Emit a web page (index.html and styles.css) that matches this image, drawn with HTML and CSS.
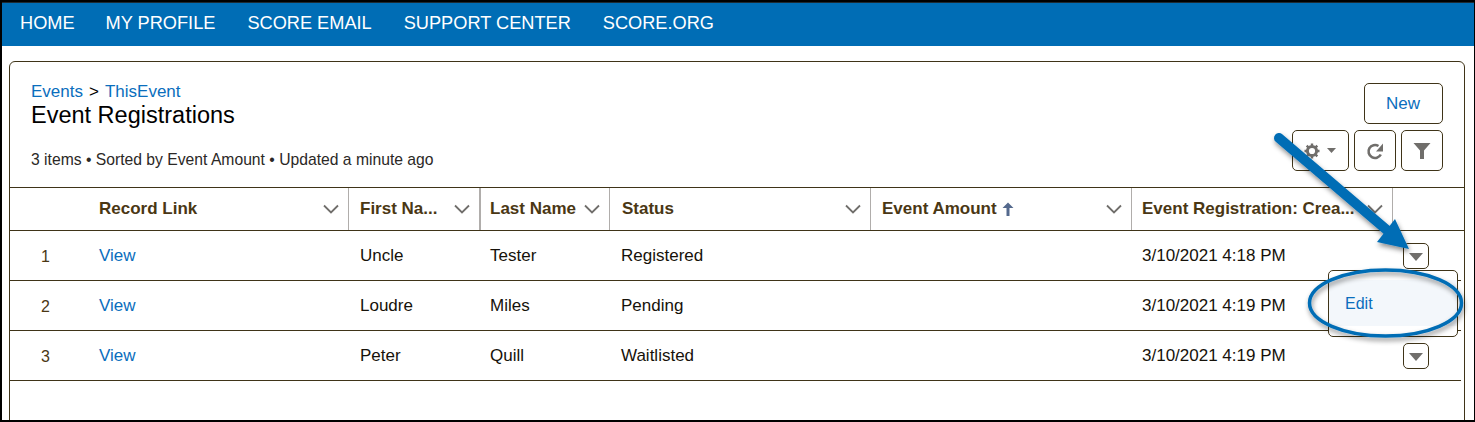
FILE: index.html
```html
<!DOCTYPE html>
<html lang="en">
<head>
<meta charset="utf-8">
<title>Event Registrations</title>
<link rel="stylesheet" href="styles.css">
</head>
<body>
<div class="frame">
  <nav class="topnav">
    <a class="home">HOME</a><a>MY PROFILE</a><a>SCORE EMAIL</a><a>SUPPORT CENTER</a><a>SCORE.ORG</a>
  </nav>
  <main class="card">
    <header class="head">
      <div class="title-block">
        <div class="crumbs"><a class="link">Events</a><span class="gt">&gt;</span><a class="link">ThisEvent</a></div>
        <h1>Event Registrations</h1>
        <p class="meta">3 items • Sorted by Event Amount • Updated a minute ago</p>
      </div>
      <div class="actions">
        <button class="btn new">New</button>
        <div class="tools">
          <button class="btn gear" aria-label="Settings">
            <svg width="18" height="18" viewBox="0 0 18 18"><circle cx="9" cy="9" r="4.6" fill="none" stroke="#706e6b" stroke-width="3"/><path d="M9 1.5v3M9 13.5v3M1.5 9h3M13.5 9h3M3.7 3.7l2.1 2.1M12.2 12.2l2.1 2.1M3.7 14.3l2.1-2.1M12.2 5.8l2.1-2.1" stroke="#706e6b" stroke-width="2.4"/></svg>
            <svg width="9" height="5" viewBox="0 0 9 5"><path d="M0 0h9L4.5 5z" fill="#706e6b"/></svg>
          </button>
          <button class="btn icon" aria-label="Refresh">
            <svg width="20" height="20" viewBox="0 0 20 20"><path d="M15.800 13.500A6.500 6.500 0 1 1 13.500 5" fill="none" stroke="#706e6b" stroke-width="2.600"/><path d="M18 2.500V10.500H11z" fill="#706e6b"/></svg>
          </button>
          <button class="btn icon" aria-label="Filter">
            <svg width="20" height="18" viewBox="0 0 20 18"><path d="M1.500 1h17l-6.500 7.500V17H8V8.500z" fill="#706e6b"/></svg>
          </button>
        </div>
      </div>
    </header>
    <div class="grid hrow">
      <div class="hc empty"></div>
      <div class="hc"><span class="ht">Record Link</span><svg class="chev" viewBox="0 0 16 10"><path d="M1 1.500l7 7 7-7" fill="none" stroke="#706e6b" stroke-width="1.800"/></svg></div>
      <div class="hc"><span class="ht">First Na...</span><svg class="chev" viewBox="0 0 16 10"><path d="M1 1.500l7 7 7-7" fill="none" stroke="#706e6b" stroke-width="1.800"/></svg></div>
      <div class="hc"><span class="ht">Last Name</span><svg class="chev" viewBox="0 0 16 10"><path d="M1 1.500l7 7 7-7" fill="none" stroke="#706e6b" stroke-width="1.800"/></svg></div>
      <div class="hc"><span class="ht">Status</span><svg class="chev" viewBox="0 0 16 10"><path d="M1 1.500l7 7 7-7" fill="none" stroke="#706e6b" stroke-width="1.800"/></svg></div>
      <div class="hc"><span class="ht">Event Amount <svg class="up" width="12" height="14" viewBox="0 0 12 14"><path d="M6 0.500L11.500 6H7.500v8H4.500V6H0.500z" fill="#54698d"/></svg></span><svg class="chev" viewBox="0 0 16 10"><path d="M1 1.500l7 7 7-7" fill="none" stroke="#706e6b" stroke-width="1.800"/></svg></div>
      <div class="hc"><span class="ht">Event Registration: Crea...</span><svg class="chev" viewBox="0 0 16 10"><path d="M1 1.500l7 7 7-7" fill="none" stroke="#706e6b" stroke-width="1.800"/></svg></div>
      <div class="hc empty"></div>
    </div>
    <div class="grid row">
      <div class="c num">1</div><div class="c"><a class="link">View</a></div><div class="c">Uncle</div><div class="c">Tester</div><div class="c">Registered</div><div class="c"></div><div class="c">3/10/2021 4:18 PM</div>
      <div class="c act"><button class="drop" aria-label="Row actions"><svg width="14" height="8" viewBox="0 0 14 8"><path d="M0 0h14L7 8z" fill="#706e6b"/></svg></button></div>
    </div>
    <div class="grid row">
      <div class="c num">2</div><div class="c"><a class="link">View</a></div><div class="c">Loudre</div><div class="c">Miles</div><div class="c">Pending</div><div class="c"></div><div class="c">3/10/2021 4:19 PM</div>
      <div class="c act"></div>
    </div>
    <div class="grid row">
      <div class="c num">3</div><div class="c"><a class="link">View</a></div><div class="c">Peter</div><div class="c">Quill</div><div class="c">Waitlisted</div><div class="c"></div><div class="c">3/10/2021 4:19 PM</div>
      <div class="c act"><button class="drop" aria-label="Row actions"><svg width="14" height="8" viewBox="0 0 14 8"><path d="M0 0h14L7 8z" fill="#706e6b"/></svg></button></div>
    </div>
  </main>
  <div class="menu"><a class="menu-item">Edit</a></div>
  <svg class="callout" width="1475" height="422" viewBox="0 0 1475 422">
    <defs>
      <filter id="sh" x="-10%" y="-10%" width="120%" height="130%"><feDropShadow dx="1" dy="3" stdDeviation="2.500" flood-color="#000" flood-opacity=".45"/></filter>
    </defs>
    <g filter="url(#sh)">
      <ellipse cx="1385.500" cy="303" rx="76" ry="33" fill="none" stroke="#006db5" stroke-width="3.500"/>
      <path d="M1279 138L1388 231" fill="none" stroke="#006db5" stroke-width="10" stroke-linecap="round"/>
      <path d="M1409 249L1377 242L1395 219z" fill="#006db5"/>
    </g>
  </svg>
</div>
</body>
</html>
```
FILE: styles.css
```css
* { box-sizing: border-box; }
html, body { margin: 0; padding: 0; height: 100%; overflow: hidden; background: #fff; }
body { font-family: "Liberation Sans", Arial, sans-serif; color: #16120a; font-size: 17px; }
.frame {
  position: relative;
  width: 1475px;
  height: 422px;
  overflow: hidden;
  border: solid #000;
  border-width: 2px 1px 2px 2px;
  background: #fff;
}
.topnav {
  height: 44px;
  background: #006db5;
  border-top: 1px solid #1c2a33;
  display: flex;
  align-items: center;
  gap: 32px;
  padding: 0 0 2px 18px;
  color: #fff;
  font-size: 18.200px;
}
.home { margin-right: -1px; }
.card {
  margin: 15px 0 0 7px;
  width: 1456px;
  height: 380px;
  border: 1px solid #3f3418;
  border-radius: 6px;
  background: #fff;
}
.head { display: flex; justify-content: space-between; height: 125px; padding: 20px 21px 0 21px; }
.crumbs { font-size: 17px; line-height: 19px; }
.link { color: #0a6ebd; }
.gt { color: #000; margin: 0 6px; }
h1 { margin: 0; font-size: 23.500px; font-weight: 400; line-height: 28px; color: #000; }
.meta { margin: 22px 0 0; font-size: 15.700px; line-height: 18px; color: #2b2826; }
.actions { display: flex; flex-direction: column; align-items: flex-end; gap: 6px; }
.btn {
  background: #fff;
  border: 1px solid #3f3418;
  border-radius: 5px;
  display: flex;
  align-items: center;
  justify-content: center;
  padding: 0;
  font: inherit;
}
.new { width: 79px; height: 41px; color: #0a6ebd; margin-top: 1px; padding-right: 1px; }
.tools { display: flex; gap: 5px; }
.tools .btn { height: 41px; }
.gear { width: 57px; gap: 6px; padding-right: 2px; }
.icon { width: 42px; }
.grid { display: grid; grid-template-columns: 77px 261px 131px 130px 261px 261px 261px 72px; }
.hrow { height: 44px; border-top: 1px solid #3f3418; border-bottom: 1px solid #3f3418; width: 1454px; }
.hc {
  display: flex;
  align-items: center;
  justify-content: space-between;
  padding: 0 9px 0 11px;
  font-size: 17px;
  font-weight: 700;
  color: #4a3714;
  border-left: 1px solid #b0adab;
  white-space: nowrap;
}
.hc:nth-child(1), .hc:nth-child(2) { border-left: 0; padding-left: 12px; }
.hc:nth-child(4) { border-left-width: 2px; padding-left: 9px; }
.hc:nth-child(5) { padding-left: 12px; }
.hc:nth-child(7) { padding-left: 10px; }
.ht { display: inline-flex; align-items: center; gap: 5px; }
.chev { width: 16px; height: 10px; flex: none; }
.row { height: 50px; width: 1451px; border-bottom: 1px solid #3f3418; }
.c { display: flex; align-items: center; padding: 1px 0 0 12px; color: #16120a; font-size: 17px; }
.c:nth-child(4), .c:nth-child(7) { padding-left: 11px; }
.num { justify-content: center; padding: 3px 6px 0 0; color: #4a3714; font-size: 16px; }
.c.act { padding: 1px 0 0 11px; }
.drop {
  width: 26px;
  height: 26px;
  border: 1px solid #3f3418;
  border-radius: 5px;
  background: #fff;
  padding: 1px 0 0;
  display: flex;
  align-items: center;
  justify-content: center;
}
.menu {
  position: absolute;
  left: 1326px;
  top: 268px;
  width: 130px;
  height: 67px;
  background: #fff;
  border: 1px solid #3f3418;
  border-radius: 5px;
  padding-top: 9px;
}
.menu-item {
  display: flex;
  align-items: center;
  height: 46px;
  padding: 2px 0 0 16px;
  background: #f3f7fb;
  color: #0a6ebd;
  font-size: 16px;
}
.callout { position: absolute; left: -2px; top: -2px; pointer-events: none; }
```
